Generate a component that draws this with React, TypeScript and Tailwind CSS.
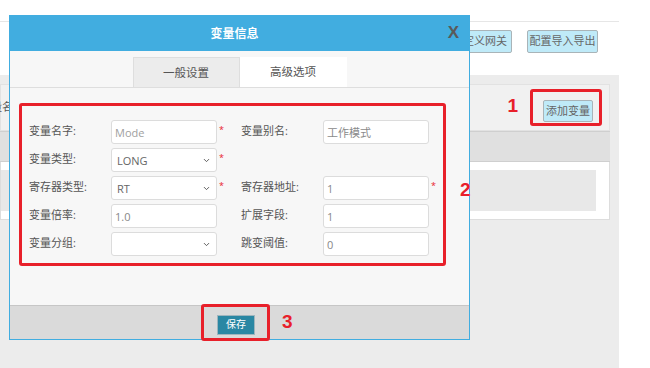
import { ChevronDown } from 'lucide-react';

interface Field {
  label: string;
  value?: string;
  select?: boolean;
  req?: boolean;
  color?: string;
}

const rows: [Field, Field | null][] = [
  [
    { label: '变量名字:', value: 'Mode', req: true, color: 'text-[#a0a0a0]' },
    { label: '变量别名:', value: '工作模式', color: 'text-[#8a8a8a]' },
  ],
  [{ label: '变量类型:', value: 'LONG', select: true, req: true, color: 'text-[#666]' }, null],
  [
    { label: '寄存器类型:', value: 'RT', select: true, req: true, color: 'text-[#666]' },
    { label: '寄存器地址:', value: '1', req: true, color: 'text-[#888]' },
  ],
  [
    { label: '变量倍率:', value: '1.0', color: 'text-[#888]' },
    { label: '扩展字段:', value: '1', color: 'text-[#888]' },
  ],
  [
    { label: '变量分组:', value: '', select: true },
    { label: '跳变阈值:', value: '0', color: 'text-[#888]' },
  ],
];

function FieldCell({ f }: { f: Field | null }) {
  if (!f) return <div className="w-[212px]" />;
  return (
    <div className="flex items-center">
      <span className="w-[82px] text-[11px] text-[#555] leading-none -mt-[3px]">{f.label}</span>
      <div className="w-[106px] h-[24px] bg-white border border-[#dcdcdc] rounded-[3px] flex items-center justify-between pl-[3px] pr-[5px]">
        <span className={`text-[11px] leading-none ${f.select ? 'pl-[2px]' : ''} ${f.color ?? ''}`}>{f.value}</span>
        {f.select && <ChevronDown size={9} strokeWidth={2.5} className="text-[#555]" />}
      </div>
      <span className="w-[24px] pl-[2px] self-start pt-[5px] text-[9px] leading-none text-[#e8202a]">
        {f.req ? '*' : ''}
      </span>
    </div>
  );
}

export default function App() {
  return (
    <div className="relative w-[650px] h-[368px] overflow-hidden bg-white font-[family-name:'Open_Sans','Noto_Sans_CJK_SC',sans-serif]">
      {/* Background page */}
      <div className="w-[619px] h-[75px] flex flex-col">
        <div className="h-[22px] border-b border-[#e6e6e6]" />
        <div className="flex justify-end gap-[15px] pr-[21px] mt-[8px]">
          <button className="h-[23px] px-[4px] bg-[#bfeaf8] border border-[#a9b4b8] rounded-[2px] text-[11px] text-[#666]">
            自定义网关
          </button>
          <button className="h-[23px] w-[71px] bg-[#bfeaf8] border border-[#a9b4b8] rounded-[2px] text-[11px] text-[#666]">
            配置导入导出
          </button>
        </div>
      </div>
      <div className="w-[619px] h-[293px] bg-[#ececec] pt-[9px] pr-[9px]">
        <div className="flex flex-col">
          <div className="h-[47px] bg-[#f1f1f1] border border-[#e2e2e2] flex items-center justify-between pr-[7px]">
            <span className="-ml-[21px] text-[11px] text-[#555]">变量名</span>
            <div className="flex items-center gap-[12px]">
              <span className="text-[19px] font-bold text-[#e8202a] leading-none -mt-[4px] font-[family-name:'Liberation_Sans',sans-serif]">1</span>
              <div className="border-[3px] border-[#e8202a] rounded-[3px] pl-[10px] pr-[6px] pt-[5px] pb-[1px]">
                <button className="h-[22px] w-[50px] bg-[#bfeaf8] border border-[#a9b4b8] rounded-[2px] text-[11px] text-[#666]">
                  添加变量
                </button>
              </div>
            </div>
          </div>
          <div className="h-[31px] bg-[#e0e0e0] border-y border-[#cfcfcf]" />
          <div className="h-[58px] bg-white border border-t-0 border-[#dddddd] pt-[8px] pr-[13px]">
            <div className="h-[41px] bg-[#e8e8e8]" />
          </div>
        </div>
      </div>

      {/* Modal */}
      <div className="absolute left-[9px] top-[15px] w-[461px] h-[325px] border border-[#41ade0] bg-[#f7f7f7] flex flex-col">
        <div className="h-[35px] bg-[#41ade0] flex items-center justify-center relative shrink-0">
          <span className="text-white text-[12px] font-bold pr-[10px]">变量信息</span>
          <span className="absolute right-[10px] top-[8px] text-[17px] font-bold text-[#5a5a5a] leading-none font-[family-name:'Liberation_Sans',sans-serif]">
            X
          </span>
        </div>
        <div className="h-[37px] border-b border-[#dedede] flex justify-center items-end shrink-0">
          <div className="w-[107px] h-[30px] bg-[#ececec] border border-b-0 border-[#dedede] flex items-center justify-center text-[11.5px] text-[#555]">
            一般设置
          </div>
          <div className="w-[107px] h-[30px] bg-white flex items-center justify-center text-[11.5px] text-[#555]">
            高级选项
          </div>
        </div>
        <div className="flex-1 flex items-start pl-[9px] pt-[15px]">
          <div className="w-[427px] h-[163px] border-[3px] border-[#e8202a] rounded-[3px] pl-[7px] pt-[14px] flex flex-col gap-[4px]">
            {rows.map((r, i) => (
              <div key={i} className="flex h-[24px]">
                <FieldCell f={r[0]} />
                <FieldCell f={r[1]} />
              </div>
            ))}
          </div>
          <span className="ml-[14px] mt-[77px] text-[19px] font-bold text-[#e8202a] leading-none font-[family-name:'Liberation_Sans',sans-serif]">
            2
          </span>
        </div>
        <div className="h-[34px] bg-[#dadada] border-t border-[#c6c6c6] flex items-center justify-center pr-[8px] shrink-0">
          <div className="relative border-[3px] border-[#e8202a] rounded-[3px] pl-[13px] pr-[12px] py-[3px]">
            <button className="h-[20px] w-[38px] bg-[#2a87a3] border border-[#9fb5bd] text-white text-[10px]">保存</button>
            <span className="absolute left-full ml-[15px] top-[5px] text-[19px] font-bold text-[#e8202a] leading-none font-[family-name:'Liberation_Sans',sans-serif]">
              3
            </span>
          </div>
        </div>
      </div>
    </div>
  );
}
